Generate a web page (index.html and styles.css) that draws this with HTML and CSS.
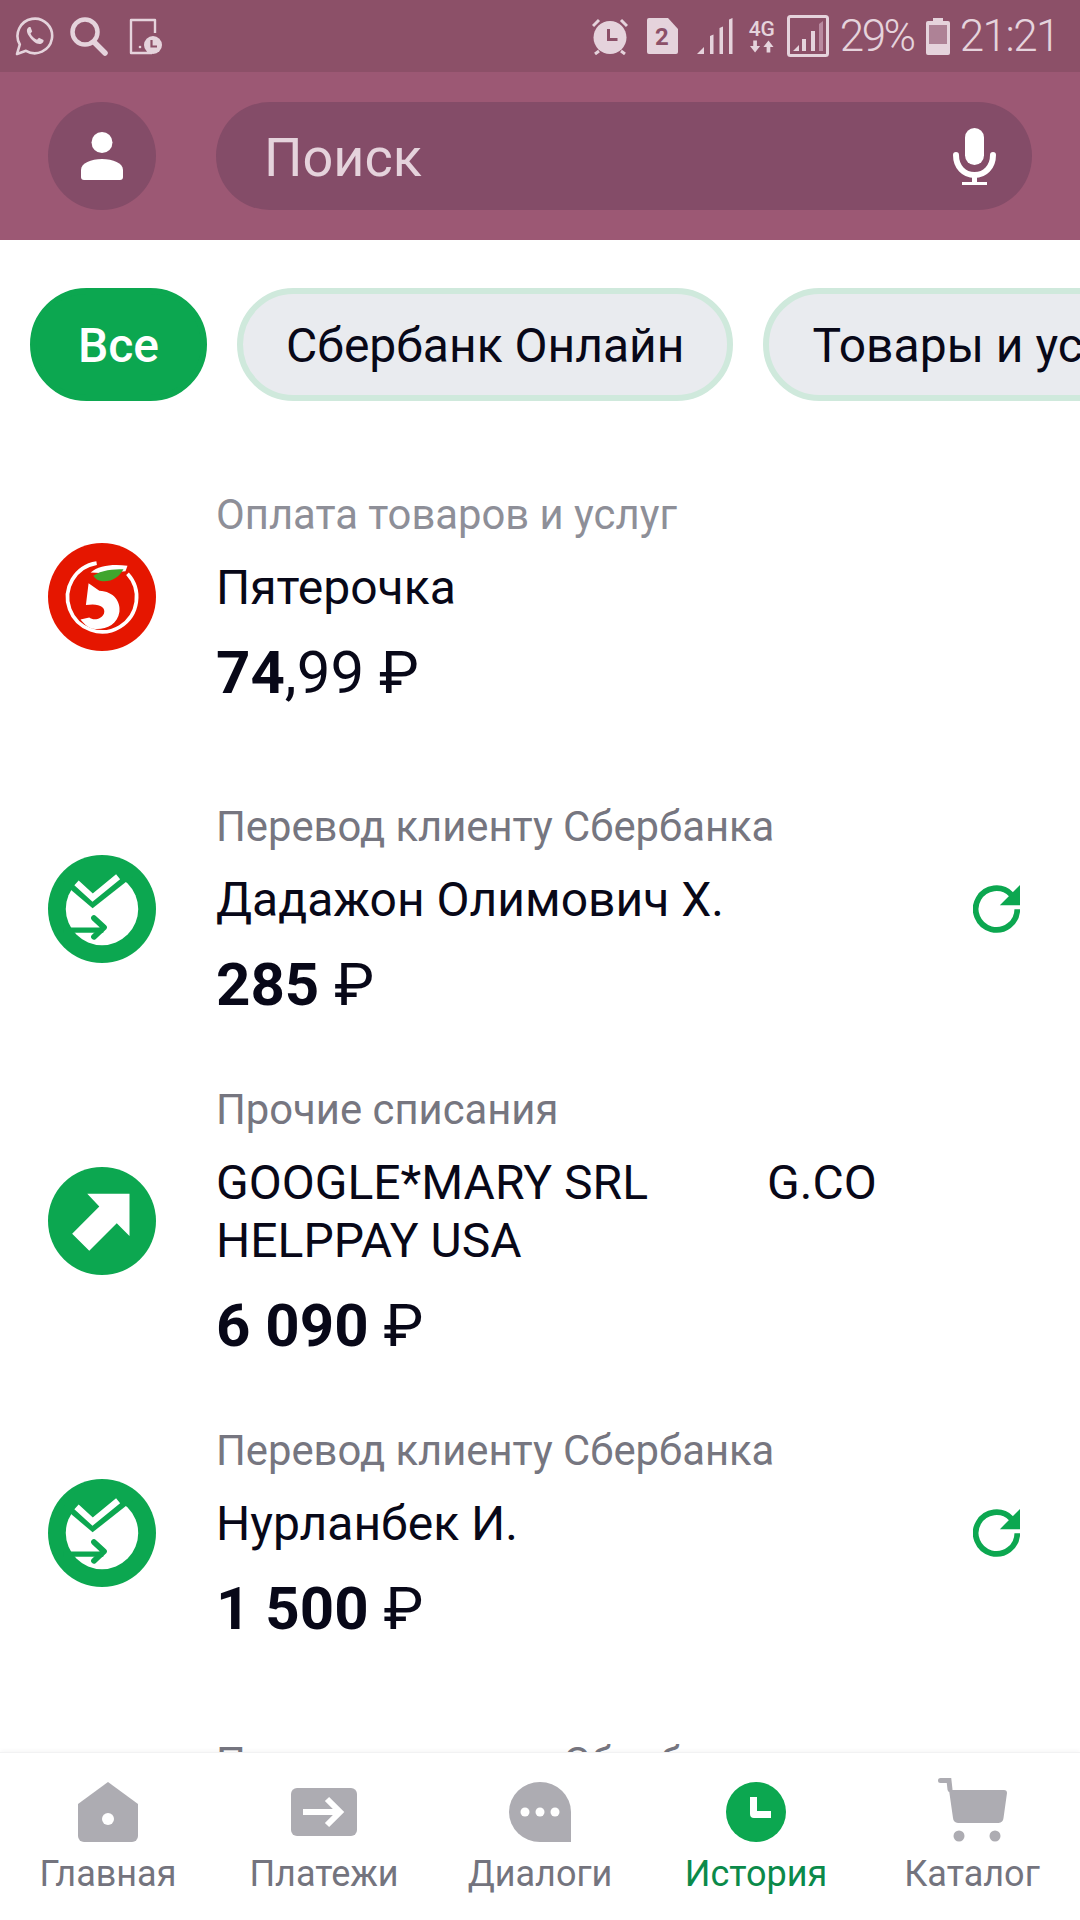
FILE: index.html
```html
<!DOCTYPE html>
<html lang="ru">
<head>
    <meta charset="UTF-8">
    <meta name="viewport" content="width=device-width, initial-scale=1.0">
    <title>История</title>
    <link rel="stylesheet" href="styles.css">
</head>
<body>
    <div class="statusbar">
        <div class="status-left">
            <svg class="st-whatsapp" viewBox="0 0 39 40"><path d="M2 38l2.800-9.500A17.300 17.300 0 1 1 11 34.800z" fill="none" stroke="#e5d3dc" stroke-width="2.600" stroke-linejoin="round"/><path d="M14 11c-2.500 1.500-3 4.500 0 9s7 8 10.500 8c2.500 0 4.500-2 4-4l-4.500-2.200-2 2c-2.500-1-5.500-3.800-6.500-6.300l1.700-2-1.700-4.500z" fill="#e5d3dc"/></svg>
            <svg class="st-search" viewBox="0 0 38 39"><circle cx="15" cy="15" r="12.500" fill="none" stroke="#e5d3dc" stroke-width="4.500"/><path d="M24 25l11 11" stroke="#e5d3dc" stroke-width="5.500" stroke-linecap="round"/></svg>
            <svg class="st-tablet" viewBox="0 0 33 37"><path d="M26 15V2H2v33h21" fill="none" stroke="#e5d3dc" stroke-width="2.400" stroke-linejoin="round"/><circle cx="11" cy="29" r="1.300" fill="#e5d3dc"/><circle cx="24" cy="27" r="9" fill="#e5d3dc"/><path d="M22.500 22v6.500h5.500" fill="none" stroke="#8c5068" stroke-width="2.200"/></svg>
        </div>
        <div class="status-right">
            <svg class="st-alarm" viewBox="0 0 36 37"><circle cx="18" cy="19.500" r="16.500" fill="#e5d3dc"/><path d="M1 8l6-6M35 8l-6-6M3 36l4-3M33 36l-4-3" stroke="#e5d3dc" stroke-width="3"/><path d="M16.500 11v10.500h9" fill="none" stroke="#8c5068" stroke-width="3"/></svg>
            <svg class="st-sim" viewBox="0 0 31 36"><path d="M2 0h19l10 11v23a2 2 0 0 1-2 2H2a2 2 0 0 1-2-2V2a2 2 0 0 1 2-2z" fill="#e5d3dc"/><text x="15" y="27" class="sim-num">2</text></svg>
            <svg class="st-signal" viewBox="0 0 37 36"><path d="M0 36l7-7v7z" fill="#e5d3dc"/><path d="M13 18l3.500-1.500V36H13zM22.500 10L26 8.500V36h-3.500zM32 1.500L35.500 0v36H32z" fill="#e5d3dc"/></svg>
            <div class="st-net">
                <span>4G</span>
                <svg viewBox="0 0 26 13"><path d="M3.500 0h4v6h3.500l-5.500 7-5.500-7h3.500zM18 13h4V7h3.500L20 0l-5.500 7H18z" fill="#e5d3dc"/></svg>
            </div>
            <svg class="st-box" viewBox="0 0 42 42"><rect x="1.500" y="1.500" width="39" height="39" rx="2" fill="none" stroke="#e5d3dc" stroke-width="3"/><path d="M6 36l6-6v6zM15 24h4v12h-4zM24 16h4v20h-4z" fill="#e5d3dc"/><path d="M32 9l4-3v30h-4z" fill="#b98aa0"/></svg>
            <span class="st-text st-percent">29%</span>
            <svg class="st-battery" viewBox="0 0 24 37"><path d="M7 0h10v3h5a2 2 0 0 1 2 2v30a2 2 0 0 1-2 2H2a2 2 0 0 1-2-2V5a2 2 0 0 1 2-2h5z" fill="#e5d3dc"/><rect x="3" y="7" width="18" height="19" fill="#ae8296"/></svg>
            <span class="st-text st-time">21:21</span>
        </div>
    </div>

    <div class="header">
        <div class="avatar">
            <svg viewBox="0 0 42 48"><circle cx="21" cy="10.500" r="10.500" fill="#fff"/><path d="M3 48a3 3 0 0 1-3-3v-7c0-7 10-11 21-11s21 4 21 11v7a3 3 0 0 1-3 3z" fill="#fff"/></svg>
        </div>
        <div class="search">
            <span class="search-text">Поиск</span>
            <svg class="mic" viewBox="0 0 43 57"><rect x="12" y="0" width="19" height="37" rx="9.500" fill="#fff"/><path d="M3 27c0 12 8 20 18.500 20S40 39 40 27" fill="none" stroke="#fff" stroke-width="6" stroke-linecap="round"/><path d="M19 46h5v8h-5zM9 54h25v3H9z" fill="#fff"/></svg>
        </div>
    </div>

    <div class="chips">
        <div class="chip chip-active">Все</div>
        <div class="chip">Сбербанк Онлайн</div>
        <div class="chip">Товары и услуги</div>
    </div>

    <div class="list">
        <div class="row row-wide">
            <svg class="row-icon" viewBox="55 40 322 322" preserveAspectRatio="none">
                <circle cx="216" cy="201" r="161" fill="#e51600"/>
                <path d="M292 132A103 103 0 1 1 200 100" fill="none" stroke="#fff" stroke-width="11"/>
                <path d="M176 160l32 22c44 2 64 33 60 63-6 40-43 55-78 51-10-1-25-11-38-28l26-6c12 10 37 6 44-12 6-20-17-32-54-25z" fill="#fff"/>
                <path d="M182 128c24-22 70-26 110-20l-6 16-60 6z" fill="#fff"/>
                <path d="M190 138c24-18 60-20 90-20-10 20-34 38-62 36-12 0-22-6-28-16z" fill="#3fa52d"/>
            </svg>
            <div class="row-body">
                <div class="row-label row-label-faded">Оплата товаров и услуг</div>
                <div class="row-title">Пятерочка</div>
                <div class="row-amount">74<span class="cents">,99 ₽</span></div>
            </div>
        </div>

        <div class="row">
            <svg class="row-icon" viewBox="55 46 322 322" preserveAspectRatio="none">
                <circle cx="216" cy="207" r="161" fill="#0ca750"/>
                <circle cx="216" cy="207" r="108" fill="#fff"/>
                <path d="M100 130l88 75 120-95-40-40H150z" fill="#0ca750"/>
                <path d="M140 129l48 44 76-62" fill="none" stroke="#fff" stroke-width="19"/>
                <path d="M100 270h120" stroke="#0ca750" stroke-width="15"/>
                <path d="M192 234l30 28-30 28" fill="none" stroke="#0ca750" stroke-width="17" stroke-linecap="round" stroke-linejoin="round"/>
            </svg>
            <div class="row-body">
                <div class="row-label">Перевод клиенту Сбербанка</div>
                <div class="row-title">Дадажон Олимович Х.</div>
                <div class="row-amount">285 <span class="cents">₽</span></div>
            </div>
            <svg class="repeat" viewBox="68 45 140 143"><path d="M182 73A62 62 0 1 0 200 117" fill="none" stroke="#0ca750" stroke-width="17"/><path d="M208 45v60h-60z" fill="#0ca750"/></svg>
        </div>

        <div class="row">
            <svg class="row-icon" viewBox="55 52 322 322" preserveAspectRatio="none">
                <circle cx="216" cy="213" r="161" fill="#0ca750"/>
                <path d="M172 132h126v126l-38-38-82 82-51-51 81-81z" fill="#fff"/>
            </svg>
            <div class="row-body">
                <div class="row-label">Прочие списания</div>
                <div class="row-title row-title-pre">GOOGLE*MARY SRL          G.CO
HELPPAY USA</div>
                <div class="row-amount">6 090 <span class="cents">₽</span></div>
            </div>
        </div>

        <div class="row row-wide">
            <svg class="row-icon" viewBox="55 46 322 322" preserveAspectRatio="none">
                <circle cx="216" cy="207" r="161" fill="#0ca750"/>
                <circle cx="216" cy="207" r="108" fill="#fff"/>
                <path d="M100 130l88 75 120-95-40-40H150z" fill="#0ca750"/>
                <path d="M140 129l48 44 76-62" fill="none" stroke="#fff" stroke-width="19"/>
                <path d="M100 270h120" stroke="#0ca750" stroke-width="15"/>
                <path d="M192 234l30 28-30 28" fill="none" stroke="#0ca750" stroke-width="17" stroke-linecap="round" stroke-linejoin="round"/>
            </svg>
            <div class="row-body">
                <div class="row-label">Перевод клиенту Сбербанка</div>
                <div class="row-title">Нурланбек И.</div>
                <div class="row-amount">1 500 <span class="cents">₽</span></div>
            </div>
            <svg class="repeat" viewBox="68 45 140 143"><path d="M182 73A62 62 0 1 0 200 117" fill="none" stroke="#0ca750" stroke-width="17"/><path d="M208 45v60h-60z" fill="#0ca750"/></svg>
        </div>

        <div class="row row-clipped">
            <div class="row-body">
                <div class="row-label">Перевод клиенту Сбербанка</div>
            </div>
        </div>
    </div>

    <div class="nav">
        <div class="nav-item">
            <div class="nav-icon"><svg width="60" height="60" viewBox="0 0 60 60"><path d="M30 0l30 22v32a6 6 0 0 1-6 6H6a6 6 0 0 1-6-6V22z" fill="#adacb2"/><circle cx="30" cy="37" r="6" fill="#fff"/></svg></div>
            <span>Главная</span>
        </div>
        <div class="nav-item">
            <div class="nav-icon"><svg width="66" height="48" viewBox="0 0 66 48"><rect width="66" height="48" rx="6" fill="#adacb2"/><path d="M12 24h38" stroke="#fff" stroke-width="6"/><path d="M36 11l13 13-13 13" fill="none" stroke="#fff" stroke-width="6"/></svg></div>
            <span>Платежи</span>
        </div>
        <div class="nav-item">
            <div class="nav-icon"><svg width="62" height="60" viewBox="0 0 62 60"><path d="M31 0a31 30 0 0 0 0 60h31V30A31 30 0 0 0 31 0z" fill="#adacb2"/><circle cx="16" cy="30" r="4.500" fill="#fff"/><circle cx="31" cy="30" r="4.500" fill="#fff"/><circle cx="46" cy="30" r="4.500" fill="#fff"/></svg></div>
            <span>Диалоги</span>
        </div>
        <div class="nav-item nav-active">
            <div class="nav-icon"><svg width="60" height="60" viewBox="0 0 60 60"><circle cx="30" cy="30" r="30" fill="#0ca750"/><path d="M24 15h7v14h14v7H28a4 4 0 0 1-4-4z" fill="#fff"/></svg></div>
            <span>История</span>
        </div>
        <div class="nav-item">
            <div class="nav-icon nav-icon-cart"><svg width="69" height="64" viewBox="0 0 69 64"><path d="M2.500 2.500h8.500l1 9" fill="none" stroke="#adacb2" stroke-width="5" stroke-linecap="round"/><path d="M11 12h55a3 3 0 0 1 3 3l-3.500 25a5.500 5.500 0 0 1-5 5H20a5.500 5.500 0 0 1-5-5z" fill="#adacb2"/><circle cx="21" cy="58" r="5.500" fill="#adacb2"/><circle cx="57" cy="58" r="5.500" fill="#adacb2"/></svg></div>
            <span>Каталог</span>
        </div>
    </div>
</body>
</html>
```

FILE: styles.css
```css
* {
    box-sizing: border-box;
}
body {
    display: flex;
    flex-direction: column;
    width: 1080px;
    height: 1920px;
    margin: 0;
    overflow: hidden;
    background-color: #fff;
    font-family: Roboto, "Liberation Sans", sans-serif;
    color: #080818;
}

/* status bar */
.statusbar {
    display: flex;
    justify-content: space-between;
    align-items: center;
    flex-shrink: 0;
    height: 72px;
    padding: 0 21px 0 15px;
    background-color: #8c5068;
}
.status-left,
.status-right {
    display: flex;
    align-items: center;
}
.st-whatsapp {
    width: 39px;
    height: 40px;
}
.st-search {
    width: 38px;
    height: 39px;
    margin-left: 16px;
}
.st-tablet {
    width: 33px;
    height: 37px;
    margin-left: 21px;
    margin-top: 1px;
}
.st-alarm {
    width: 36px;
    height: 37px;
}
.st-sim {
    width: 31px;
    height: 36px;
    margin-left: 19px;
}
.sim-num {
    font-size: 24px;
    font-weight: 700;
    text-anchor: middle;
    fill: #8c5068;
}
.st-signal {
    width: 37px;
    height: 36px;
    margin-left: 19px;
}
.st-net {
    display: flex;
    flex-direction: column;
    align-items: center;
    width: 28px;
    margin-left: 14px;
    color: #e5d3dc;
    font-size: 21px;
    font-weight: 500;
    line-height: 21px;
}
.st-net svg {
    width: 24px;
    height: 13px;
}
.st-box {
    width: 42px;
    height: 42px;
    margin-left: 11px;
}
.st-text {
    color: #e5d3dc;
    font-size: 44px;
    font-weight: 300;
    letter-spacing: -1.5px;
    line-height: 72px;
}
.st-percent {
    margin-left: 11px;
    letter-spacing: -2.5px;
}
.st-battery {
    width: 24px;
    height: 37px;
    margin-left: 12px;
}
.st-time {
    margin-left: 10px;
}

/* search header */
.header {
    display: flex;
    align-items: center;
    gap: 60px;
    flex-shrink: 0;
    height: 168px;
    padding: 0 48px;
    background-color: #9c5874;
}
.avatar {
    display: flex;
    justify-content: center;
    align-items: center;
    flex-shrink: 0;
    width: 108px;
    height: 108px;
    border-radius: 50%;
    background-color: #844c68;
}
.avatar svg {
    width: 42px;
    height: 48px;
}
.search {
    display: flex;
    justify-content: space-between;
    align-items: center;
    flex: 1;
    height: 108px;
    padding: 0 36px 0 48px;
    border-radius: 54px;
    background-color: #844c68;
}
.search-text {
    margin-top: 2px;
    color: #e5d3dc;
    font-size: 54px;
}
.mic {
    width: 43px;
    height: 57px;
}

/* filter chips */
.chips {
    display: flex;
    gap: 30px;
    flex-shrink: 0;
    padding: 48px 0 0 30px;
    overflow: hidden;
}
.chip {
    flex-shrink: 0;
    height: 113px;
    padding: 0 43px;
    border: 6px solid #cfe9dc;
    border-radius: 57px;
    background-color: #e9ebef;
    font-size: 48px;
    line-height: 104px;
    white-space: nowrap;
}
.chip-active {
    padding: 0 42px;
    border-color: #0ca750;
    background-color: #0ca750;
    color: #fff;
    font-weight: 500;
}

/* operations */
.list {
    flex: 1;
    min-height: 0;
    padding-top: 85px;
    overflow: hidden;
}
.row {
    display: flex;
    align-items: center;
    padding: 0 60px 56px 48px;
}
.row-wide {
    padding-bottom: 85px;
}
.row-clipped {
    padding-left: 216px;
}
.row-icon {
    flex-shrink: 0;
    width: 108px;
    height: 108px;
    margin-right: 60px;
    margin-bottom: 5px;
}
.row-body {
    flex: 1;
    min-width: 0;
}
.row-label {
    color: #767680;
    font-size: 41.8px;
    line-height: 58px;
}
.row-label-faded {
    color: #8e8f98;
}
.row-title {
    margin-top: 15px;
    font-size: 48px;
    line-height: 58px;
}
.row-title-pre {
    white-space: pre-wrap;
}
.row-amount {
    margin-top: 16px;
    font-size: 60px;
    font-weight: 700;
    line-height: 80px;
}
.cents {
    font-weight: 400;
}
.repeat {
    flex-shrink: 0;
    width: 47px;
    height: 48px;
    margin-bottom: 6px;
}

/* bottom navigation */
.nav {
    display: grid;
    grid-template-columns: repeat(5, 1fr);
    flex-shrink: 0;
    height: 168px;
    padding-top: 29px;
    border-top: 1px solid #f2f2f3;
    background-color: #fff;
    box-shadow: 0 -2px 4px rgba(0, 0, 0, 0.03);
}
.nav-item {
    display: flex;
    flex-direction: column;
    align-items: center;
    color: #74747e;
    font-size: 36px;
    line-height: 44px;
}
.nav-icon {
    display: flex;
    align-items: center;
    height: 60px;
    margin-bottom: 10px;
}
.nav-icon-cart {
    align-items: flex-end;
}
.nav-active {
    color: #0b8a4a;
}
```
